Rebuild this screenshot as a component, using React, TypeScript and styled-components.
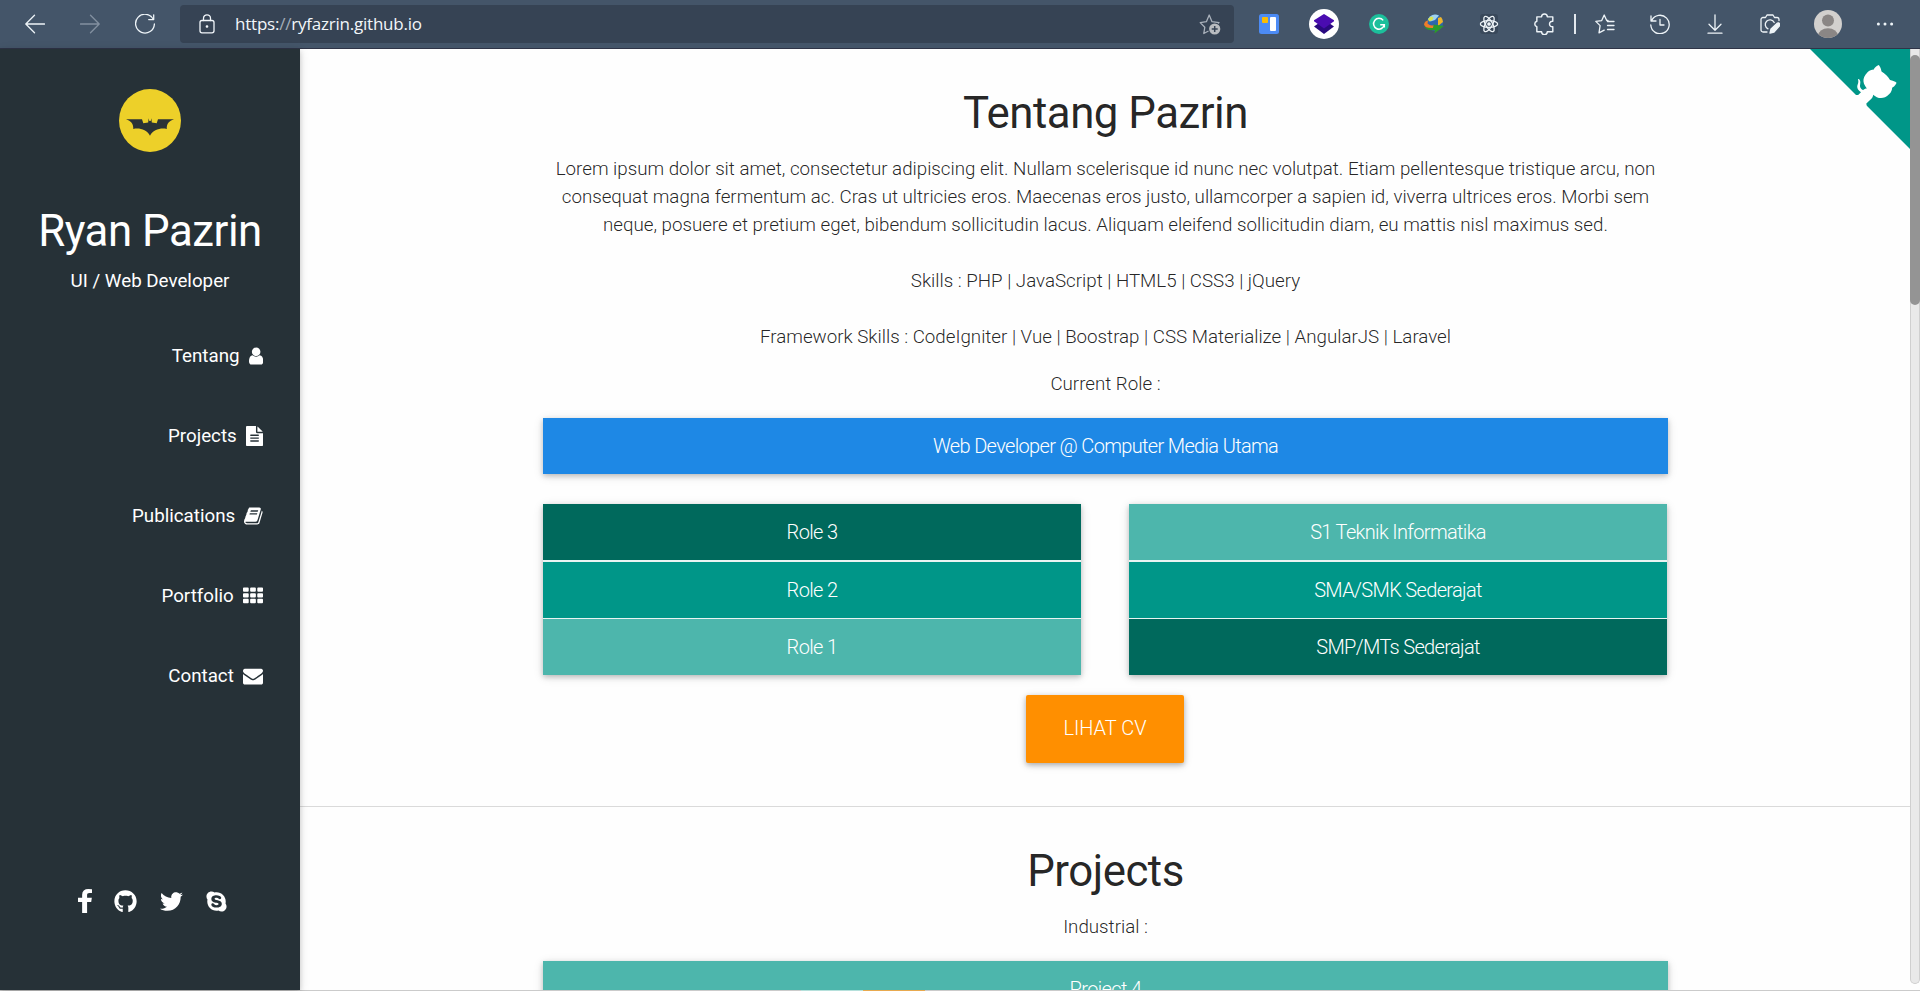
import React from "react";
import styled, { createGlobalStyle } from "styled-components";
import { FaGithub, FaTwitter, FaSkype } from "react-icons/fa";

const GlobalStyle = createGlobalStyle`
  *, *::before, *::after { box-sizing: border-box; }
  html, body { margin: 0; padding: 0; }
  body {
    height: 991px;
    overflow: hidden;
    background: #fefefe;
    font-family: Roboto, "Liberation Sans", sans-serif;
    font-size: 18.75px;
    line-height: 1.5;
    color: rgba(0, 0, 0, 0.87);
  }
  svg { display: block; }
`;

const Window = styled.div`
  width: 1920px;
  height: 991px;
  display: flex;
  flex-direction: column;
  overflow: hidden;
`;

/* ---------- Browser toolbar ---------- */

const Toolbar = styled.header`
  flex: none;
  height: 49px;
  display: flex;
  align-items: center;
  background: #445569;
  border-bottom: 1px solid #2f3447;
`;

const NavButtons = styled.div`
  display: flex;
  width: 180px;
  padding-left: 7.5px;
`;

const ToolCell = styled.div<{ $w?: number; $dim?: boolean }>`
  flex: none;
  width: ${(p) => p.$w ?? 55}px;
  height: 30px;
  display: flex;
  align-items: center;
  justify-content: center;
  color: ${(p) => (p.$dim ? "#8390a0" : "#eef4f8")};
`;

const AddressBar = styled.div`
  width: 1054px;
  height: 38px;
  padding: 0 13px 0 17px;
  display: flex;
  align-items: center;
  border-radius: 4px;
  background: #364354;
  color: #f2f6fa;
`;

const Url = styled.span`
  flex: 1;
  margin-left: 18px;
  font-family: "Open Sans", "Noto Sans", sans-serif;
  font-size: 17px;
  line-height: 22px;
  letter-spacing: -0.22px;
  i { font-style: normal; color: #a4adb8; }
`;

const Extensions = styled.div`
  display: flex;
  align-items: center;
  padding-left: 7.5px;
`;

const Divider = styled.div`
  width: 2px;
  height: 20px;
  margin: 0 2px;
  background: #e3e8ee;
`;

/* ---------- Page ---------- */

const Page = styled.div`
  position: relative;
  flex: 1;
  min-height: 0;
  display: flex;
`;

const Sidebar = styled.aside`
  position: relative;
  z-index: 1;
  flex: none;
  width: 300px;
  padding-top: 40px;
  display: flex;
  flex-direction: column;
  align-items: center;
  background: #263137;
  color: #fff;
  box-shadow: 0 2px 5px rgba(0, 0, 0, 0.16), 0 2px 10px rgba(0, 0, 0, 0.12);
`;

const Name = styled.h1`
  margin: 54.5px 0 0;
  font-size: 43.8px;
  font-weight: 400;
  line-height: 48px;
  letter-spacing: -0.48px;
  white-space: nowrap;
`;

const Tagline = styled.p`
  margin: 12.5px 0 0;
  font-size: 18.75px;
  line-height: 28px;
`;

const Menu = styled.nav`
  align-self: stretch;
  margin-top: 21px;
  padding-right: 37.2px;
`;

const MenuItem = styled.a`
  height: 80px;
  display: flex;
  align-items: center;
  justify-content: flex-end;
  gap: 9px;
`;

const Social = styled.div`
  display: flex;
  align-items: center;
  align-self: flex-start;
  margin: 172px 0 0 77.5px;
  height: 26px;
`;

const SocialLink = styled.a<{ $gap?: number }>`
  margin-left: ${(p) => p.$gap ?? 0}px;
`;

const Content = styled.main`
  flex: 1;
  min-width: 0;
  overflow: hidden;
  background: #fefefe;
`;

const Section = styled.section<{ $height?: number }>`
  height: ${(p) => (p.$height ? `${p.$height}px` : "auto")};
  padding: 40px 242px 0 243px;
  display: flex;
  flex-direction: column;
  align-items: center;
  text-align: center;
  border-bottom: 1px solid #dadada;
`;

const Heading = styled.h2`
  margin: 0;
  font-size: 43.8px;
  font-weight: 400;
  line-height: 48px;
  letter-spacing: -0.5px;
`;

const Text = styled.p<{ $top: number }>`
  margin: ${(p) => p.$top}px 0 0;
  font-weight: 300;
  line-height: 28px;
  letter-spacing: -0.01px;
  white-space: nowrap;
`;

const Card = styled.div<{ $top?: number }>`
  align-self: stretch;
  margin-top: ${(p) => p.$top ?? 0}px;
  display: flex;
  flex-direction: column;
  box-shadow: 0 2px 5px 0 rgba(0, 0, 0, 0.2), 0 2px 10px 0 rgba(0, 0, 0, 0.12);
  background: #e8f4f2;
`;

const Row = styled.div<{ $bg: string; $gap?: number }>`
  height: 56px;
  margin-top: ${(p) => p.$gap ?? 0}px;
  padding-top: 14px;
  font-size: 20px;
  line-height: 28px;
  font-weight: 300;
  letter-spacing: -0.66px;
  text-align: center;
  white-space: nowrap;
  color: #fff;
  background: ${(p) => p.$bg};
`;

const Columns = styled.div`
  align-self: stretch;
  margin: 30px 1px 0 0;
  display: grid;
  grid-template-columns: 538px 538px;
  justify-content: space-between;
`;

const CvButton = styled.a`
  margin: 20px 1px 0 0;
  width: 158px;
  height: 68px;
  border-radius: 2px;
  background: #ff8f00;
  color: #fff;
  font-size: 20px;
  font-weight: 300;
  line-height: 67px;
  box-shadow: 0 2px 5px 0 rgba(0, 0, 0, 0.24), 0 2px 10px 0 rgba(0, 0, 0, 0.14);
`;

const ScrollTrack = styled.div`
  flex: none;
  width: 10px;
  padding-top: 6px;
  margin-bottom: 6px;
  background: #e9e9e9;
  border: solid #cfcfcf;
  border-width: 0 1px 1px;
  border-radius: 0 0 5px 5px;
`;

const ScrollThumb = styled.div`
  height: 250px;
  margin: 0 -1px;
  border-radius: 5px;
  background: #949494;
`;

const Corner = styled.svg`
  position: absolute;
  top: 0;
  right: 10px;
`;

const BottomEdge = styled.div`
  flex: none;
  height: 1px;
  padding-left: 801px;
  display: flex;
  background: #cbcbcb;
`;

const EdgeMark = styled.div<{ $color: string }>`
  width: 62px;
  background: ${(p) => p.$color};
`;

/* ---------- Icons ---------- */

const Line: React.FC<{ size?: number; w?: number; children: React.ReactNode }> = ({ size = 20, w = 1.3, children }) => (
  <svg width={size} height={size} viewBox="0 0 20 20" fill="none" stroke="currentColor" strokeWidth={w} strokeLinecap="round" strokeLinejoin="round">
    {children}
  </svg>
);

const icons = {
  user: {
    box: "256 0 1280 1792", w: 14.3,
    d: "M1536 1399q0 109-62.5 187t-150.5 78h-854q-88 0-150.5-78t-62.5-187q0-85 8.5-160.5t31.5-152 58.5-131 94-89 134.5-34.5q131 128 313 128t313-128q76 0 134.5 34.5t94 89 58.5 131 31.5 152 8.5 160.5zm-256-887q0 159-112.5 271.5t-271.5 112.5-271.5-112.5-112.5-271.5 112.5-271.5 271.5-112.5 271.5 112.5 112.5 271.5z",
  },
  file: {
    box: "128 0 1536 1792", w: 17.1,
    d: "M1596 476q14 14 28 36h-472v-472q22 14 36 28zm-476 164h544v1056q0 40-28 68t-68 28h-1344q-40 0-68-28t-28-68v-1600q0-40 28-68t68-28h800v544q0 40 28 68t68 28zm160 736v-64q0-14-9-23t-23-9h-704q-14 0-23 9t-9 23v64q0 14 9 23t23 9h704q14 0 23-9t9-23zm0-256v-64q0-14-9-23t-23-9h-704q-14 0-23 9t-9 23v64q0 14 9 23t23 9h704q14 0 23-9t9-23zm0-256v-64q0-14-9-23t-23-9h-704q-14 0-23 9t-9 23v64q0 14 9 23t23 9h704q14 0 23-9t9-23z",
  },
  book: {
    box: "64 0 1664 1792", w: 18.6,
    d: "M1703 478q40 57 18 129l-275 906q-19 64-76.5 107.5t-122.5 43.5h-923q-77 0-148.5-53.5t-99.5-131.5q-24-67-2-127 0-4 3-27t4-37q1-8-3-21.5t-3-19.5q2-11 8-21t16.5-23.5 16.5-23.5q23-38 45-91.5t30-91.5q3-10 .5-30t-.5-28q3-11 17-28t17-23q21-36 42-92t25-90q1-9-2.5-32t.5-28q4-13 22-30.5t22-22.5q19-26 42.5-84.5t27.5-96.5q1-8-3-25.5t-2-26.5q2-8 9-18t18-23 17-21q8-12 16.5-30.5t15-35 16-36 19.5-32 26.5-23.5 36-11.5 47.5 5.5l-1 3q38-9 51-9h761q74 0 114 56t18 130l-274 906q-36 119-71.5 153.5t-128.5 34.5h-869q-27 0-38 15-11 16-1 43 24 70 144 70h923q29 0 56-15.5t35-41.5l300-987q7-22 5-57 38 15 59 43zm-1064 2q-4 13 2 22.5t20 9.5h608q13 0 25.5-9.5t16.5-22.5l21-64q4-13-2-22.5t-20-9.5h-608q-13 0-25.5 9.5t-16.5 22.5zm-83 256q-4 13 2 22.5t20 9.5h608q13 0 25.5-9.5t16.5-22.5l21-64q4-13-2-22.5t-20-9.5h-608q-13 0-25.5 9.5t-16.5 22.5z",
  },
  grid: {
    box: "0 0 1792 1792", w: 20,
    d: [128, 640, 1152].map((y) => [0, 640, 1280].map((x) => `M${x + 80} ${y}h352q80 0 80 80v224q0 80-80 80h-352q-80 0-80-80v-224q0-80 80-80z`).join("")).join(""),
  },
  mail: {
    box: "0 0 1792 1792", w: 20,
    d: "M1792 710v794q0 66-47 113t-113 47h-1472q-66 0-113-47t-47-113v-794q44 49 101 87 362 246 497 345 57 42 92.5 65.5t94.5 48 110 24.5h2q51 0 110-24.5t94.5-48 92.5-65.5q170-123 498-345 57-39 100-87zm0-294q0 79-49 151t-122 123q-376 261-468 325-10 7-42.5 31t-54 38.5-52 32.5-57.5 27-50 9h-2q-23 0-50-9t-57.5-27-52-32.5-54-38.5-42.5-31q-91-64-262-182.5t-205-142.5q-62-42-117-115.5t-55-136.5q0-78 41.5-130t118.5-52h1472q65 0 112.5 47t47.5 113z",
  },
};

const MenuIcon: React.FC<{ name: keyof typeof icons }> = ({ name }) => (
  <svg width={icons[name].w} height={20} viewBox={icons[name].box} fill="currentColor">
    <path d={icons[name].d} />
  </svg>
);

const BatLogo = () => (
  <svg width="62" height="63" viewBox="0 0 62 63">
    <ellipse cx="31" cy="31.5" rx="31" ry="31.5" fill="#edd029" />
    <path
      fill="#2b3236"
      d="M7 30.3H23L24.3 34.2L29.2 33.6L29.6 29.3L30.3 32H31.7L32.4 29.3L32.8 33.6L37.7 34.2L39 30.3H55C50 31.8 47.5 35 47.8 40C42 38.5 34 40.5 31 46.8C28 40.5 20 38.5 14.3 40C14.5 35 12 31.8 7 30.3Z"
    />
  </svg>
);

const GithubCorner = () => (
  <Corner width="100" height="100" viewBox="0 0 250 250">
    <path fill="#009688" d="M0,0 L115,115 L130,115 L142,142 L250,250 L250,0 Z" />
    <path
      fill="#fff"
      d="M128.3,109.0 C113.8,99.7 119.0,89.6 119.0,89.6 C122.0,82.7 120.5,78.6 120.5,78.6 C119.2,72.0 123.4,76.3 123.4,76.3 C127.3,80.9 125.5,87.3 125.5,87.3 C122.9,97.6 130.6,101.9 134.4,103.2"
    />
    <path
      fill="#fff"
      d="M115.0,115.0 C114.9,115.1 118.7,116.5 119.8,115.4 L133.7,101.6 C136.9,99.2 139.9,98.4 142.2,98.6 C133.8,88.0 127.5,74.4 143.8,58.0 C148.5,53.4 154.0,51.2 159.7,51.0 C160.3,49.4 163.2,43.6 171.4,40.1 C171.4,40.1 176.1,42.5 178.8,56.2 C183.1,58.6 187.2,61.8 190.9,65.4 C194.5,69.0 197.7,73.2 200.1,77.6 C213.8,80.2 216.3,84.9 216.3,84.9 C212.7,93.1 206.9,96.0 205.4,96.6 C205.1,102.4 203.0,107.8 198.3,112.5 C181.9,128.9 168.3,122.5 157.7,114.1 C157.9,116.9 156.7,120.9 152.7,124.9 L141.0,136.5 C139.8,137.7 141.6,141.9 141.8,141.8 Z"
    />
  </Corner>
);

const BrowserToolbar = () => (
  <Toolbar>
    <NavButtons>
      <ToolCell>
        <Line><path d="M19.5 10H1M9.5 1.2L.8 10l8.7 8.8" /></Line>
      </ToolCell>
      <ToolCell $dim>
        <Line><path d="M.5 10H19M10.5 1.2l8.7 8.8-8.7 8.8" /></Line>
      </ToolCell>
      <ToolCell>
        <Line><path d="M18.3 5.2A9.4 9.4 0 1 0 19.4 10M18.7.8v4.8h-5" /></Line>
      </ToolCell>
    </NavButtons>
    <AddressBar>
      <Line>
        <rect x="3" y="6.5" width="14" height="12.3" rx="2" />
        <path d="M6.5 6.5V4.3a3.5 3.5 0 0 1 7 0v2.2" />
        <circle cx="10" cy="12.5" r=".7" fill="currentColor" />
      </Line>
      <Url>https:<i>//</i>ryfazrin.github.io</Url>
      <svg width="22" height="22" viewBox="0 0 22 22" fill="none" stroke="#a9b1bb" strokeWidth="1.3" strokeLinejoin="round">
        <path d="M9.500 18l-4.700 2.500 1-6.300L1.200 9.600l6.200-.9L10.200 2 13 8.700l7 .9-1 1" />
        <circle cx="15.700" cy="16" r="5.600" fill="#b9bcc0" stroke="none" />
        <path d="M15.700 13v6M12.700 16h6" stroke="#364354" strokeWidth="1.5" />
      </svg>
    </AddressBar>
    <Extensions>
      <ToolCell>
        <svg width="20" height="20" viewBox="0 0 20 20">
          <rect width="20" height="20" rx="2.5" fill="#4c8bf5" />
          <rect x="3" y="3" width="6" height="6" rx="1" fill="#fbbc05" />
          <rect x="11" y="3" width="6" height="14" rx="1" fill="#fff" />
        </svg>
      </ToolCell>
      <ToolCell>
        <svg width="30" height="30" viewBox="0 0 30 30">
          <circle cx="15" cy="15" r="15" fill="#fff" />
          <path d="M15 10.500l10 7-10 7.500-10-7.500z" fill="#2a0a80" />
          <path d="M15 5l10 6.300v1L15 19.500 5 12.300v-1z" fill="#4a0cb0" />
        </svg>
      </ToolCell>
      <ToolCell>
        <svg width="20" height="20" viewBox="0 0 20 20" fill="none">
          <circle cx="10" cy="10" r="10" fill="#1cbf9b" />
          <path d="M14.200 6.400A5.400 5.400 0 1 0 15.300 10.700H11.200M15.300 10.500v3" stroke="#fff" strokeWidth="1.5" />
        </svg>
      </ToolCell>
      <ToolCell>
        <svg width="22" height="20" viewBox="0 0 22 20">
          <circle cx="12" cy="8.700" r="8.200" fill="#2f66ad" />
          <path d="M7 2.400a8.200 8.200 0 0 1 9-.8L12 6 7.500 7.500 5 5z" fill="#9fd1ee" />
          <path d="M15 4l3-1a8 8 0 0 1 2 5L15 12z" fill="#f0b428" />
          <path d="M8 2.500l2.500 1-1 2.500-3.500 1.500-1-2.500z" fill="#d9e34e" />
          <path d="M1 12q2 2.500 9 1.500l.5-3L21 12l-9.500 7.500.3-3.500Q3 17 1 12z" fill="#2c9b2a" />
          <path d="M1 10.500Q1.500 7 5 6.500L4.500 9.500Q7 12 10.500 11.300L10 14Q2 14.500 1 10.500z" fill="#ef7d28" />
        </svg>
      </ToolCell>
      <ToolCell>
        <Line size={20} w={1.3}>
          <rect x="1" y="0" width="18" height="20" rx="3" fill="#39485a" stroke="none" />
          <ellipse cx="10" cy="10" rx="8.600" ry="3.400" />
          <ellipse cx="10" cy="10" rx="8.600" ry="3.400" transform="rotate(60 10 10)" />
          <ellipse cx="10" cy="10" rx="8.600" ry="3.400" transform="rotate(120 10 10)" />
          <circle cx="10" cy="10" r="1.200" fill="currentColor" />
        </Line>
      </ToolCell>
      <ToolCell>
        <Line size={22} w={1.3}>
          <path d="M3.500 3.500h4.300a2.600 2.600 0 0 1 5.200 0H18V7.600a2.500 2.500 0 1 0 0 4.900v4.600h-5a2.600 2.600 0 0 1-5.200 0H3.500v-4.600a2.600 2.600 0 0 1 0-5z" />
        </Line>
      </ToolCell>
      <Divider />
      <ToolCell>
        <Line><path d="M13 6.500h-1.300L9.200 1 6.700 6.600.8 7.400l4.300 4.200L4 18.800l5.200-2.700M12.500 7.500H19M12.500 11.500H19M12.500 15.500H19" /></Line>
      </ToolCell>
      <ToolCell>
        <Line><path d="M1 2v5h5M1.700 6.500A9.200 9.200 0 1 1 .8 11M10 5.500V11h4" /></Line>
      </ToolCell>
      <ToolCell>
        <Line><path d="M10 .8v15M4 10.300l6 6 6-6M3 19.200h14" /></Line>
      </ToolCell>
      <ToolCell>
        <Line>
          <path d="M7 18H3a2 2 0 0 1-2-2V5.500a2 2 0 0 1 2-2h2.500L7 1h6l1.500 2.500H17a2 2 0 0 1 2 2v1M8 14.800A4.700 4.700 0 1 1 14.200 8.500" />
          <path d="M10 19l1-4 6.500-6a1.800 1.800 0 0 1 2.300 2.500L14 18z" fill="currentColor" />
        </Line>
      </ToolCell>
      <ToolCell $w={61}>
        <svg width="28" height="28" viewBox="0 0 28 28">
          <defs>
            <clipPath id="avatar"><circle cx="14" cy="14" r="14" /></clipPath>
          </defs>
          <g clipPath="url(#avatar)">
            <rect width="28" height="28" fill="#d2d0ce" />
            <circle cx="14" cy="10.500" r="6" fill="#8a8685" />
            <ellipse cx="14" cy="26" rx="10" ry="7.800" fill="#8a8685" />
          </g>
        </svg>
      </ToolCell>
      <ToolCell $w={53}>
        <svg width="18" height="4" viewBox="0 0 18 4" fill="currentColor">
          <circle cx="2.400" cy="2" r="1.500" />
          <circle cx="9" cy="2" r="1.500" />
          <circle cx="15.600" cy="2" r="1.500" />
        </svg>
      </ToolCell>
    </Extensions>
  </Toolbar>
);

const menu: { label: string; icon: keyof typeof icons }[] = [
  { label: "Tentang", icon: "user" },
  { label: "Projects", icon: "file" },
  { label: "Publications", icon: "book" },
  { label: "Portfolio", icon: "grid" },
  { label: "Contact", icon: "mail" },
];

const App = () => (
  <Window>
    <GlobalStyle />
    <BrowserToolbar />
    <Page>
      <Sidebar>
        <BatLogo />
        <Name>Ryan Pazrin</Name>
        <Tagline>UI / Web Developer</Tagline>
        <Menu>
          {menu.map((m) => (
            <MenuItem key={m.label}>
              {m.label}
              <MenuIcon name={m.icon} />
            </MenuItem>
          ))}
        </Menu>
        <Social>
          <SocialLink>
            <svg width="14" height="24" viewBox="479 0 864 1664" preserveAspectRatio="none" fill="currentColor">
              <path d="M1343 12v264h-157q-86 0-116 36t-30 108v189h293l-39 296h-254v759h-306v-759h-255v-296h255v-218q0-186 104-288.500t277-102.500q147 0 228 12z" />
            </svg>
          </SocialLink>
          <SocialLink $gap={22.5}><FaGithub size={23} /></SocialLink>
          <SocialLink $gap={22.5}><FaTwitter size={23} /></SocialLink>
          <SocialLink $gap={22.5}><FaSkype size={23} /></SocialLink>
        </Social>
      </Sidebar>
      <Content>
        <Section $height={758}>
          <Heading>Tentang Pazrin</Heading>
          <Text $top={18}>
            Lorem ipsum dolor sit amet, consectetur adipiscing elit. Nullam scelerisque id nunc nec volutpat. Etiam pellentesque tristique arcu, non
            <br />
            consequat magna fermentum ac. Cras ut ultricies eros. Maecenas eros justo, ullamcorper a sapien id, viverra ultrices eros. Morbi sem
            <br />
            neque, posuere et pretium eget, bibendum sollicitudin lacus. Aliquam eleifend sollicitudin diam, eu mattis nisl maximus sed.
            <br />
            <br />
            Skills : PHP | JavaScript | HTML5 | CSS3 | jQuery
            <br />
            <br />
            Framework Skills : CodeIgniter | Vue | Boostrap | CSS Materialize | AngularJS | Laravel
          </Text>
          <Text $top={19}>Current Role :</Text>
          <Card $top={20}>
            <Row $bg="#1e88e5">Web Developer @ Computer Media Utama</Row>
          </Card>
          <Columns>
            <Card>
              <Row $bg="#00695c">Role 3</Row>
              <Row $bg="#009688" $gap={2}>Role 2</Row>
              <Row $bg="#4db6ac" $gap={1}>Role 1</Row>
            </Card>
            <Card>
              <Row $bg="#4db6ac">S1 Teknik Informatika</Row>
              <Row $bg="#009688" $gap={2}>SMA/SMK Sederajat</Row>
              <Row $bg="#00695c" $gap={1}>SMP/MTs Sederajat</Row>
            </Card>
          </Columns>
          <CvButton>LIHAT CV</CvButton>
        </Section>
        <Section>
          <Heading>Projects</Heading>
          <Text $top={18}>Industrial :</Text>
          <Card $top={20}>
            <Row $bg="#4db6ac">Project 4</Row>
          </Card>
        </Section>
      </Content>
      <ScrollTrack>
        <ScrollThumb />
      </ScrollTrack>
      <GithubCorner />
    </Page>
    <BottomEdge>
      <EdgeMark $color="#b5e0db" />
      <EdgeMark $color="#e8a94f" />
    </BottomEdge>
  </Window>
);

export default App;
